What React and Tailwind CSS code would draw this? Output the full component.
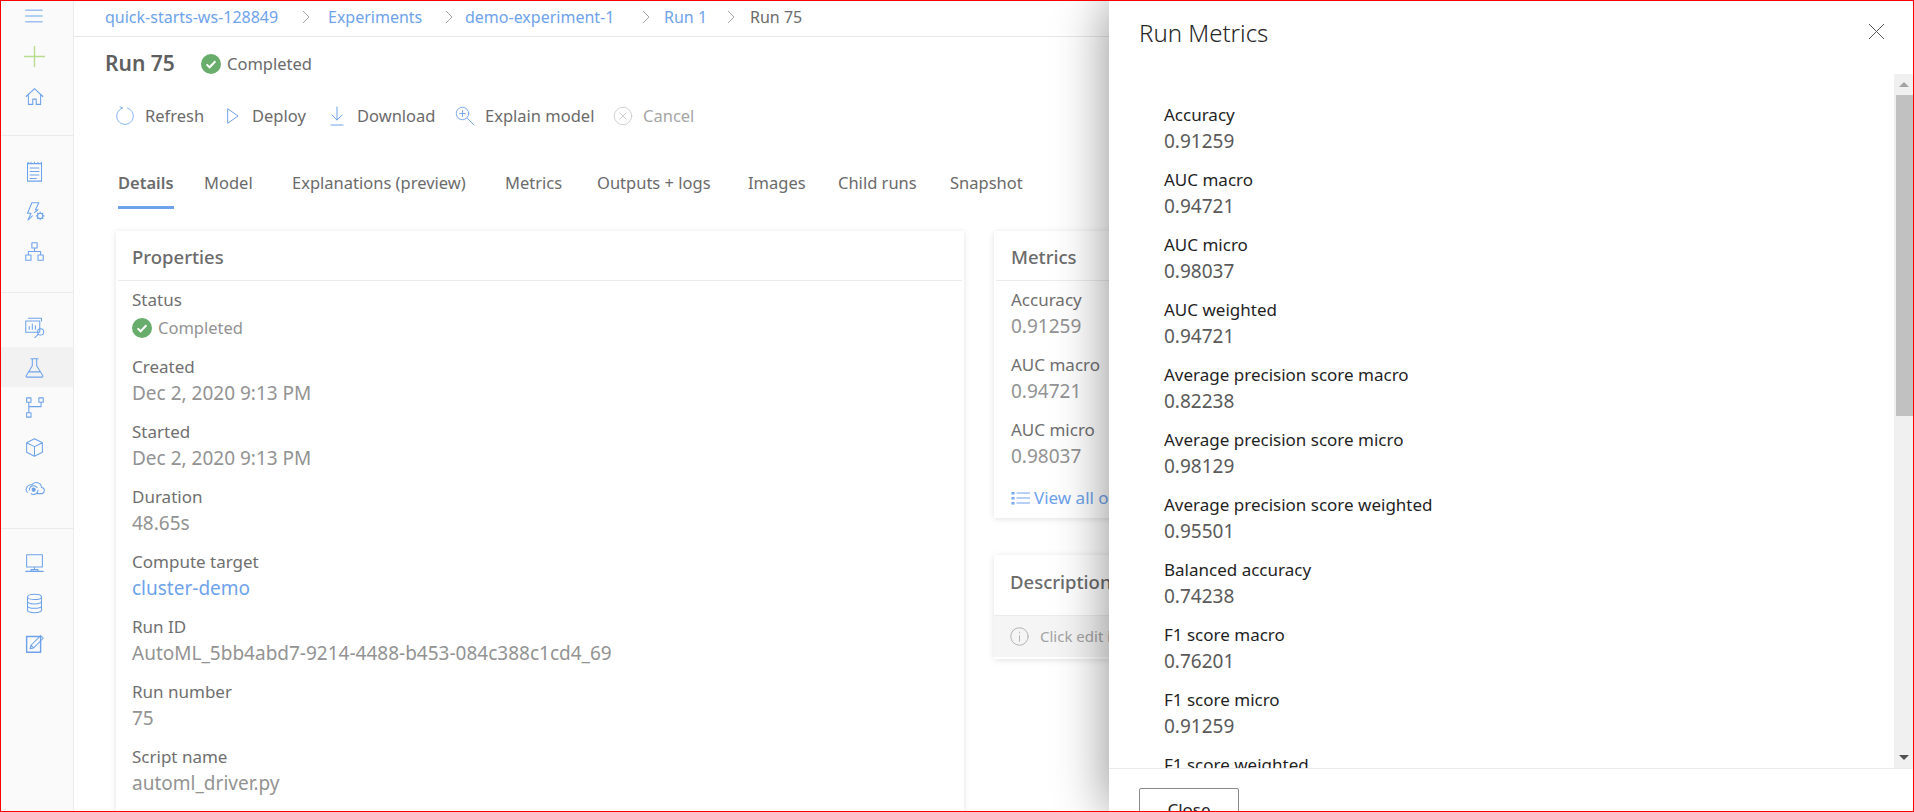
const S = ({ children, className = "w-6 h-6", vb = "0 0 24 24", sw = 1.2, color = "#6ea3ec" }) => (
  <svg viewBox={vb} className={className} fill="none" stroke={color} strokeWidth={sw} strokeLinecap="round" strokeLinejoin="round">{children}</svg>
);

const Check = ({ className }) => (
  <svg viewBox="0 0 20 20" className={className}>
    <circle cx="10" cy="10" r="10" fill="#68ad6c" />
    <path d="M5.6 10.4l3 2.9 5.8-6" fill="none" stroke="#fff" strokeWidth="2" />
  </svg>
);

const icons = {
  menu: <><path d="M2 5h20M2 12h20M2 19h20" /></>,
  plus: <><path d="M12 0v24M0 12h24" stroke="#b9dd8e" strokeWidth="1.6" /></>,
  home: <><path d="M2.5 12L12 3l9.5 9M5 10v11h5v-6h4v6h5V10" /></>,
  notes: <><path d="M4 3h16v20H4zM4 3l1-1.5M8 3V1.5M12 3V1.5M16 3V1.5M20 3V1.5M7 8h10M7 12h10M7 16h10M7 20h7" /></>,
  bolt: <><path d="M9 2h8l-4 8h3l-4 3M9 2L4 14h4l-3.5 8 5-5" /><circle cx="18.5" cy="17" r="3" /><path d="M18.5 12.5v1.5M18.5 20v1.5M14 17h1.500M21.500 17H23M15.300 13.800l1 1M20.700 19.200l1 1M15.300 20.200l1-1M20.700 14.800l1-1" /></>,
  org: <><path d="M9 2h6v6H9zM2 16h6v6H2zM16 16h6v6h-6zM12 8v4M5 16v-4h14v4" /></>,
  dash: <><path d="M5 1.500h15v3M2 4.500h16v13H2zM6 14v-3M9.500 14V8M13 14v-4" /><circle cx="19" cy="17" r="3.500" /><path d="M16.500 19.500L12 24" /></>,
  flask: <><path d="M8 2h8M9.500 2v8L2.500 21.500q-.5 1.500 1 1.500h17q1.500 0 1-1.500L14.500 10V2M6 17h12" /></>,
  pipe: <><path d="M3 1h5v5H3zM17 1h5v5h-5zM3 18h5v5H3zM5.500 6v12M19.500 6v5H5.500" /></>,
  cube: <><path d="M12 2l9 4.500v11L12 22l-9-4.500v-11zM3 6.500l9 4.500 9-4.500M12 11v11" /></>,
  cloud: <><path d="M15 19h4.500a3.500 3.500 0 0 0 .5-7 6 6 0 0 0-11-3 5 5 0 0 0-6 3.500 4 4 0 0 0 1 5" /><circle cx="11" cy="14.500" r="1.800" fill="#6ea3ec" /><path d="M6 15a5 5 0 0 1 9-3M16 15a5 5 0 0 1-8 4" /></>,
  mon: <><path d="M3 2h18v14H3zM12 16v3M8 19h8v2H8zM2 21h20" /></>,
  db: <><ellipse cx="12" cy="4.500" rx="8" ry="3" /><path d="M4 4.500v15c0 1.700 3.600 3 8 3s8-1.300 8-3v-15M4 9.500c0 1.700 3.600 3 8 3s8-1.300 8-3M4 14.500c0 1.700 3.600 3 8 3s8-1.300 8-3" /></>,
  edit: <><path d="M3 4h16v18H3V4z" strokeWidth="1.600" /><path d="M7 18l1-4L19 3l3 3-11 11zM8 14l3 3" /></>,
};

const Nav = ({ name, active, h = "h-10" }) => (
  <div className={`flex items-center justify-center pr-[6px] ${h} ${active ? "bg-[#f2f2f2]" : ""}`}>
    <S className={name === "menu" ? "w-[22px] h-[20px]" : "w-[21px] h-[21px]"}>{icons[name]}</S>
  </div>
);

const Chevron = () => (
  <svg viewBox="0 0 8 14" className="w-[8px] h-[14px]" fill="none" stroke="#a6a6a6" strokeWidth="1"><path d="M1 1l6 6-6 6" /></svg>
);

const Field = ({ label, value, link }) => (
  <div className="h-[65px] leading-[26px]">
    <div className="text-[17px] text-[#6f6f6f]">{label}</div>
    <div className={`text-[19px] ${link ? "text-[#6ea3ec]" : "text-[#939393]"}`}>{value}</div>
  </div>
);

const Tool = ({ icon, label, disabled, className }) => (
  <div className={`flex items-center ${className}`}>
    {icon}
    <span className={`text-[16.5px] ${disabled ? "text-[#a6a6a6]" : "text-[#6b6b6b]"}`}>{label}</span>
  </div>
);

const metrics = [
  ["Accuracy", "0.91259"], ["AUC macro", "0.94721"], ["AUC micro", "0.98037"], ["AUC weighted", "0.94721"],
  ["Average precision score macro", "0.82238"], ["Average precision score micro", "0.98129"],
  ["Average precision score weighted", "0.95501"], ["Balanced accuracy", "0.74238"],
  ["F1 score macro", "0.76201"], ["F1 score micro", "0.91259"], ["F1 score weighted", "0.88000"],
];

export default function App() {
  return (
    <div className="relative w-[1914px] h-[812px] overflow-hidden bg-white border border-[#f00] flex font-['Noto_Sans',sans-serif]">
      <aside className="w-[73px] shrink-0 bg-[#fafafa] border-r border-[#ebebeb] flex flex-col">
        <div className="h-[135px] border-b border-[#ebebeb] pb-[19px]">
          <Nav name="menu" h="h-[29px]" />
          <div className="h-[6px]" />
          <Nav name="plus" />
          <Nav name="home" />
        </div>
        <div className="h-[157px] border-b border-[#ebebeb] pt-[15px]">
          <Nav name="notes" /><Nav name="bolt" /><Nav name="org" />
        </div>
        <div className="h-[236px] border-b border-[#ebebeb] pt-[14px]">
          <Nav name="dash" /><Nav name="flask" active /><Nav name="pipe" /><Nav name="cube" /><Nav name="cloud" />
        </div>
        <div className="flex-1 pt-[14px]">
          <Nav name="mon" /><Nav name="db" /><Nav name="edit" />
        </div>
      </aside>

      <main className="flex-1 min-w-0 flex flex-col overflow-hidden">
        <nav className="h-[36px] shrink-0 border-b border-[#e8e8e8] flex items-center pl-[31px] text-[16px] text-[#6ea3ec] pb-[4px]">
          <span className="w-[197px]">quick-starts-ws-128849</span><Chevron />
          <span className="ml-[18px] w-[117px]">Experiments</span><Chevron />
          <span className="ml-[12px] w-[177px]">demo-experiment-1</span><Chevron />
          <span className="ml-[14px] w-[63px]">Run 1</span><Chevron />
          <span className="ml-[15px] text-[#6b6b6b]">Run 75</span>
        </nav>

        <div className="h-[58px] shrink-0 flex items-center pl-[31px] pb-[4px]">
          <h1 className="text-[21px] font-semibold text-[#5f5f5f] w-[96px]">Run 75</h1>
          <Check className="w-[20px] h-[20px] mr-[6px]" />
          <span className="text-[16.5px] text-[#6b6b6b]">Completed</span>
        </div>

        <div className="h-[38px] mt-[2px] shrink-0 flex items-center pl-[41px]">
          <Tool className="w-[111px]" label="Refresh" icon={<S className="w-[20px] h-[20px] mr-[10px]" sw={1}><path d="M9 2.500a10 10 0 1 0 6 0M9 2.500L6 1" /></S>} />
          <Tool className="w-[103px]" label="Deploy" icon={<S className="w-[14px] h-[20px] mr-[12px]" vb="0 0 14 20" sw={1}><path d="M2 3l10 7-10 7z" /></S>} />
          <Tool className="w-[126px]" label="Download" icon={<S className="w-[16px] h-[20px] mr-[12px]" vb="0 0 16 20" sw={1}><path d="M8 1v13M3 9l5 5 5-5M2 19h12" /></S>} />
          <Tool className="w-[158px]" label="Explain model" icon={<S className="w-[20px] h-[20px] mr-[10px]" sw={1.1}><circle cx="9" cy="9" r="7.500" /><path d="M14.500 14.500L23 23M9 5.500v7M5.500 9h7" /></S>} />
          <Tool label="Cancel" disabled icon={<S className="w-[20px] h-[20px] mr-[10px]" sw={1} color="#c8c8c8"><circle cx="12" cy="12" r="10.500" /><path d="M8 8l8 8M16 8l-8 8" /></S>} />
        </div>

        <div className="h-[56px] shrink-0 mt-[22px] flex pl-[44px] text-[16.5px] text-[#6b6b6b] pt-[14px]">
          <div className="w-[86px]"><span className="inline-block font-semibold pb-[10px] border-b-[3px] border-[#6ea3ec]">Details</span></div>
          <span className="w-[88px]">Model</span>
          <span className="w-[213px]">Explanations (preview)</span>
          <span className="w-[92px]">Metrics</span>
          <span className="w-[151px]">Outputs + logs</span>
          <span className="w-[90px]">Images</span>
          <span className="w-[112px]">Child runs</span>
          <span>Snapshot</span>
        </div>

        <div className="flex-1 min-h-0 flex gap-[30px] pl-[42px] pt-[18px]">
          <section className="w-[848px] shrink-0 h-[640px] bg-white shadow-[0_1px_6px_rgba(0,0,0,0.12)]">
            <h2 className="h-[50px] mx-[2px] pl-[14px] pt-[2px] flex items-center border-b border-[#ececec] text-[18.5px] font-medium text-[#6b6b6b]">Properties</h2>
            <div className="pl-[16px] pt-[6px] leading-[26px]">
              <div className="h-[67px]">
                <div className="text-[17px] text-[#6f6f6f]">Status</div>
                <div className="flex items-center h-[30px] text-[16.5px] text-[#939393]"><Check className="w-[20px] h-[20px] mr-[6px]" />Completed</div>
              </div>
              <Field label="Created" value="Dec 2, 2020 9:13 PM" />
              <Field label="Started" value="Dec 2, 2020 9:13 PM" />
              <Field label="Duration" value="48.65s" />
              <Field label="Compute target" value="cluster-demo" link />
              <Field label="Run ID" value="AutoML_5bb4abd7-9214-4488-b453-084c388c1cd4_69" />
              <Field label="Run number" value="75" />
              <Field label="Script name" value="automl_driver.py" />
            </div>
          </section>

          <div className="w-[600px] shrink-0 flex flex-col gap-[37px]">
            <section className="h-[287px] bg-white shadow-[0_1px_6px_rgba(0,0,0,0.12)]">
              <h2 className="h-[50px] mx-[2px] pl-[15px] pt-[2px] flex items-center border-b border-[#ececec] text-[18.5px] font-medium text-[#6b6b6b]">Metrics</h2>
              <div className="pl-[17px] pt-[6px]">
                <Field label="Accuracy" value="0.91259" />
                <Field label="AUC macro" value="0.94721" />
                <Field label="AUC micro" value="0.98037" />
                <div className="flex items-center h-[26px] mt-[3px] text-[17px] text-[#6ea3ec]">
                  <S className="w-[19px] h-[14px] mr-[4px]" vb="0 0 19 14" sw={1.2}><path d="M6 2h13M6 7h13M6 12h13M1 1.500h2v1.500H1zM1 6.500h2V8H1zM1 11.500h2V13H1z" /></S>
                  View all other metrics
                </div>
              </div>
            </section>
            <section className="h-[104px] bg-white shadow-[0_1px_6px_rgba(0,0,0,0.12)]">
              <h2 className="h-[61px] pl-[16px] pb-[6px] flex items-center border-b border-[#ececec] text-[18.5px] font-medium text-[#6b6b6b]">Description</h2>
              <div className="h-[41px] bg-[#f5f5f5] pl-[16px] flex items-center text-[15px] text-[#a3a3a3]">
                <S className="w-[19px] h-[19px] mr-[11px]" sw={1.1} color="#a8a8a8"><circle cx="12" cy="12" r="11" /><path d="M12 11v7M12 6.500v1" /></S>
                Click edit icon to add a description
              </div>
            </section>
          </div>
        </div>
      </main>

      <aside className="absolute top-0 bottom-0 right-0 w-[804px] bg-white shadow-[0_0_50px_rgba(0,0,0,0.45)] flex flex-col overflow-hidden">
        <header className="h-[73px] shrink-0 flex items-start justify-between pl-[30px] pr-[29px] pt-[17px]">
          <h2 className="text-[24px] font-light text-[#262626] leading-[30px]">Run Metrics</h2>
          <svg viewBox="0 0 15 15" className="w-[15px] h-[15px] mt-[6px]" fill="none" stroke="#555" strokeWidth="1"><path d="M0 0l15 15M15 0L0 15" /></svg>
        </header>
        <div className="flex-1 min-h-0 flex">
          <div className="flex-1 pl-[55px] pt-[28px] overflow-hidden">
            {metrics.map(([k, v]) => (
              <div key={k} className="h-[65px] leading-[26px]">
                <div className="text-[17px] text-[#1f1f1f]">{k}</div>
                <div className="text-[19px] text-[#5a5a5a]">{v}</div>
              </div>
            ))}
          </div>
          <div className="w-[19px] shrink-0 bg-[#f0f0f0] flex flex-col">
            <div className="h-[21px] flex items-center justify-center pb-[1px]"><span className="w-0 h-0 border-x-[5px] border-x-transparent border-b-[5px] border-b-[#a3a3a3]" /></div>
            <div className="h-[321px] ml-[2px] bg-[#c1c1c1]" />
            <div className="flex-1" />
            <div className="h-[21px] flex items-center justify-center"><span className="w-0 h-0 border-x-[5px] border-x-transparent border-t-[5px] border-t-[#505050]" /></div>
          </div>
        </div>
        <footer className="h-[43px] shrink-0 border-t border-[#ebebeb] pl-[30px] pt-[19px]">
          <button className="w-[100px] h-[44px] border border-[#8a8a8a] rounded-[2px] text-[17px] text-[#262626] bg-white">Close</button>
        </footer>
      </aside>
    </div>
  );
}
